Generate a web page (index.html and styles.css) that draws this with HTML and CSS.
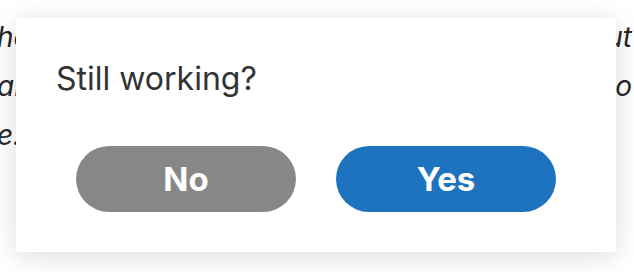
FILE: index.html
```html
<!DOCTYPE html>
<html lang="en">
<head>
<meta name="viewport" content="width=device-width, initial-scale=1.0">
  <title>Still working?</title>
  <link rel="stylesheet" href="styles.css">
</head>
<body>

  <div class="pagina">
    <p class="linea"><span>he</span><span>ut</span></p>
    <p class="linea"><span>ar</span><span>o</span></p>
    <p class="linea"><span>e.</span><span></span></p>
  </div>

  <div class="dialogo">
    <h2 class="titulo">Still working?</h2>
    <div class="botones">
      <button class="btn btn-no">No</button>
      <button class="btn btn-si">Yes</button>
    </div>
  </div>

</body>
</html>
```
FILE: styles.css
```css
* {
  margin: 0;
  padding: 0;
  box-sizing: border-box;
}

body {
  width: 634px;
  height: 272px;
  background: #ffffff;
  font-family: Inter, "Liberation Sans", sans-serif;
  position: relative;
  overflow: hidden;
}

.pagina {
  padding-top: 13px;
  color: #262626;
  font-size: 28px;
  font-style: italic;
}

.linea {
  display: flex;
  justify-content: space-between;
  line-height: 49px;
  margin-left: -3px;
  padding-right: 2px;
}

.dialogo {
  position: absolute;
  top: 18px;
  left: 16px;
  width: 600px;
  height: 234px;
  padding: 43px 40px 40px;
  background: #ffffff;
  box-shadow: 0 4px 24px rgba(0, 0, 0, 0.14);
}

.titulo {
  font-size: 32px;
  font-weight: normal;
  line-height: 36px;
  color: #333333;
}

.botones {
  display: flex;
  gap: 40px;
  padding: 0 20px;
  margin-top: 49px;
}

.btn {
  width: 220px;
  height: 66px;
  border: none;
  border-radius: 33px;
  color: #ffffff;
  font-family: Inter, "Liberation Sans", sans-serif;
  font-size: 33px;
  font-weight: bold;
  cursor: pointer;
}

.btn-no {
  background: #878787;
}

.btn-si {
  background: #1e73be;
}
```
